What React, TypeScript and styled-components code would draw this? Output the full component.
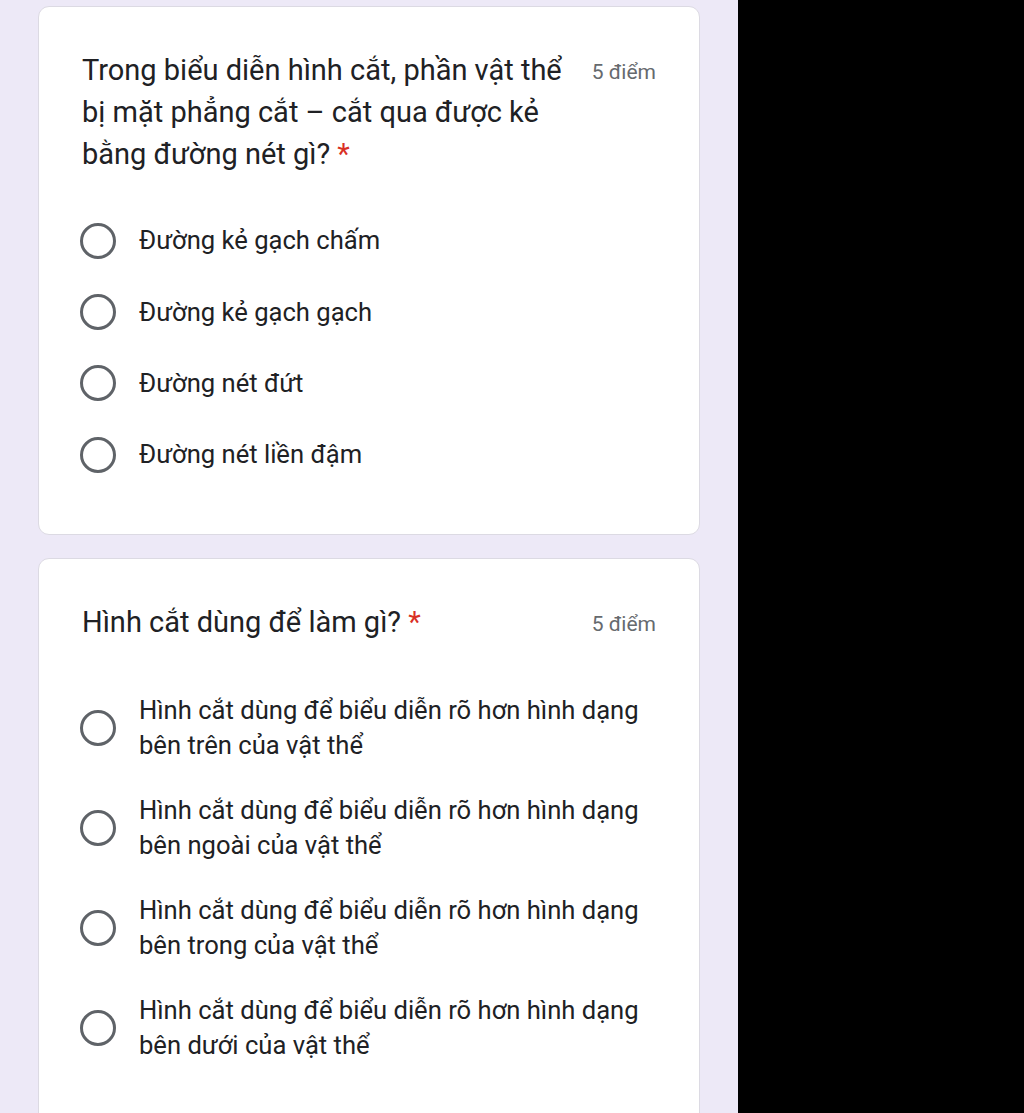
import React from "react";
import styled, { createGlobalStyle } from "styled-components";

const Global = createGlobalStyle`
  html, body { margin: 0; padding: 0; }
  body { background: #000; font-family: Roboto, "Noto Sans", "Liberation Sans", sans-serif; }
`;

const Page = styled.div`
  display: flex;
  width: 1024px;
  height: 1113px;
  overflow: hidden;
`;

const Form = styled.div`
  width: 738px;
  background: #ede9f7;
  padding: 6px 0 0 38px;
  box-sizing: border-box;
  display: flex;
  flex-direction: column;
  gap: 23px;
`;

const Side = styled.div`
  flex: 1;
  background: #000;
`;

const Card = styled.div<{ $pb: number }>`
  width: 662px;
  box-sizing: border-box;
  background: #fff;
  border: 1px solid #dcdae3;
  border-radius: 11px;
  padding: 42px 43px ${(p) => p.$pb}px 41px;
  flex-shrink: 0;
`;

const Header = styled.div`
  display: flex;
  align-items: flex-start;
  justify-content: space-between;
  padding-left: 2px;
`;

const Title = styled.div`
  font-size: 29px;
  line-height: 42px;
  color: #202124;
  letter-spacing: 0;
`;

const Star = styled.span`
  color: #d93025;
`;

const Points = styled.div`
  font-size: 21px;
  line-height: 42px;
  color: #666a6e;
  white-space: nowrap;
  margin-left: 20px;
  padding-top: 2px;
`;

const Options = styled.div<{ $mt: number }>`
  display: flex;
  flex-direction: column;
  margin-top: ${(p) => p.$mt}px;
`;

const Option = styled.label<{ $h: number }>`
  display: flex;
  align-items: center;
  gap: 23px;
  min-height: ${(p) => p.$h}px;
`;

const Radio = styled.span`
  width: 36px;
  height: 36px;
  box-sizing: border-box;
  border: 3px solid #5f6368;
  border-radius: 50%;
  flex-shrink: 0;
`;

const OptText = styled.span`
  font-size: 25.6px;
  line-height: 35px;
  color: #202124;
`;

const q1 = ["Đường kẻ gạch chấm", "Đường kẻ gạch gạch", "Đường nét đứt", "Đường nét liền đậm"];
const q2 = [
  ["Hình cắt dùng để biểu diễn rõ hơn hình dạng", "bên trên của vật thể"],
  ["Hình cắt dùng để biểu diễn rõ hơn hình dạng", "bên ngoài của vật thể"],
  ["Hình cắt dùng để biểu diễn rõ hơn hình dạng", "bên trong của vật thể"],
  ["Hình cắt dùng để biểu diễn rõ hơn hình dạng", "bên dưới của vật thể"],
];

export default function App() {
  return (
    <>
      <Global />
      <Page>
        <Form>
          <Card $pb={43}>
            <Header>
              <Title>
                Trong biểu diễn hình cắt, phần vật thể
                <br />
                bị mặt phẳng cắt – cắt qua được kẻ
                <br />
                bằng đường nét gì? <Star>*</Star>
              </Title>
              <Points>5 điểm</Points>
            </Header>
            <Options $mt={30}>
              {q1.map((t) => (
                <Option key={t} $h={71.4}>
                  <Radio />
                  <OptText>{t}</OptText>
                </Option>
              ))}
            </Options>
          </Card>
          <Card $pb={45}>
            <Header>
              <Title>
                Hình cắt dùng để làm gì? <Star>*</Star>
              </Title>
              <Points>5 điểm</Points>
            </Header>
            <Options $mt={34}>
              {q2.map((t, i) => (
                <Option key={i} $h={99.8}>
                  <Radio />
                  <OptText>
                    {t[0]}
                    <br />
                    {t[1]}
                  </OptText>
                </Option>
              ))}
            </Options>
          </Card>
        </Form>
        <Side />
      </Page>
    </>
  );
}
